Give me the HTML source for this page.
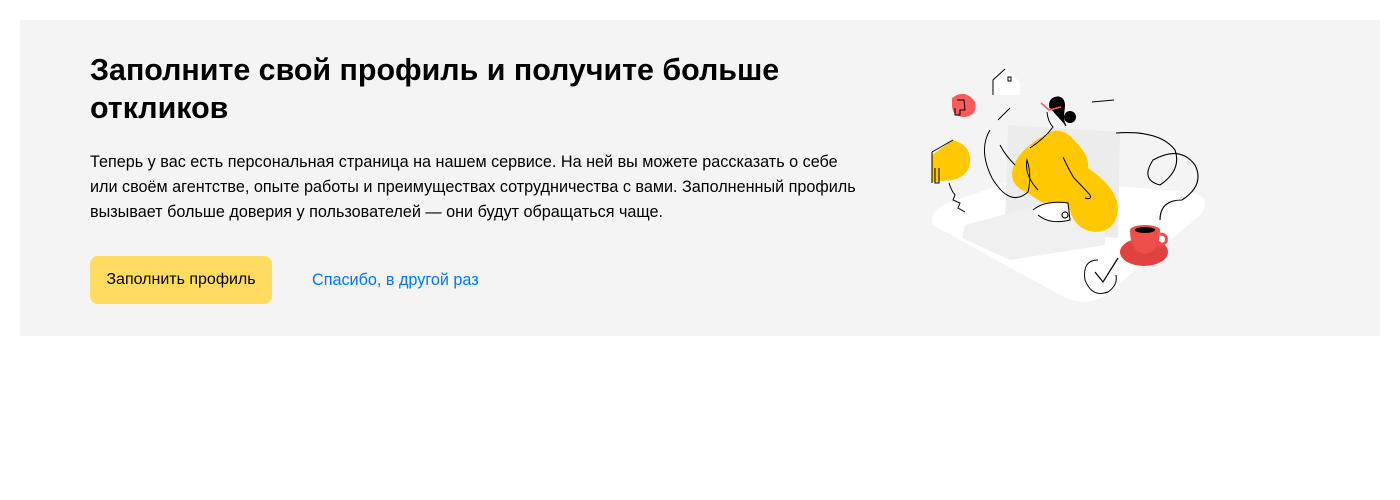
<!DOCTYPE html>
<html><head><meta charset="utf-8"><style>
body{margin:0;background:#fff;font-family:"Liberation Sans",sans-serif;}
.box{position:absolute;left:20px;top:20px;width:1360px;height:316px;background:#f4f4f4;}
h1{position:absolute;left:70px;top:31px;margin:0;width:740px;font-size:30.4px;line-height:38px;font-weight:bold;color:#000;}
p{position:absolute;left:70px;top:130px;margin:0;width:766px;font-size:16.2px;line-height:25px;color:#000;}
.btn{position:absolute;left:70px;top:236px;width:182px;height:48px;background:#ffdc60;border-radius:8px;font-size:16px;line-height:48px;text-align:center;color:#000;}
.lnk{position:absolute;left:292px;top:236px;line-height:48px;font-size:16.2px;color:#0077ff;}
svg{position:absolute;left:900px;top:40px;}
</style></head><body>
<div class="box">
<h1>Заполните свой профиль и получите больше откликов</h1>
<p>Теперь у вас есть персональная страница на нашем сервисе. На ней вы можете рассказать о себе или своём агентстве, опыте работы и преимуществах сотрудничества с вами. Заполненный профиль вызывает больше доверия у пользователей — они будут обращаться чаще.</p>
<div class="btn">Заполнить профиль</div>
<div class="lnk">Спасибо, в другой раз</div>
<svg width="300" height="250" viewBox="0 0 300 250" fill="none" stroke="#000" stroke-width="1.2">
<path d="M13,165 Q8,152 28,143 L100,118 L268,132 Q295,136 280,155 L190,232 Q168,250 140,235 Z" fill="#fff" stroke="none"/>
<path d="M88,65 L200,72 L198,178 L85,168 Z" fill="#ececec" stroke="none"/>
<path d="M45,165 L140,140 L185,150 L185,185 L90,200 L42,178 Z" fill="#f0f0f0" stroke="none"/>
<path d="M125,75 Q140,65 152,78 Q170,95 168,108 Q198,128 198,150 Q195,172 175,172 Q155,170 150,150 Q130,150 108,133 Q88,125 93,108 Q98,90 125,75 Z" fill="#ffc800" stroke="none"/>
<path d="M32,38 Q45,28 55,42 Q58,55 45,57 Q32,57 32,45 Z" fill="#ff5a5a" stroke="none"/>
<path d="M35,48 L35,55 L40,55 L40,50 L45,50 L44,40 L37,40" stroke-width="1"/>
<path d="M12,95 L33,80 Q50,85 50,100 Q50,115 33,120 L12,122 Z" fill="#ffc800" stroke="none"/>
<path d="M12,92 L12,123 M12,92 L33,80 M15,108 L15,123 L19,123 L19,108" stroke-width="1"/>
<path d="M29,123 Q31,130 35,135 L33,140 L40,143 L38,148 L45,152" stroke-width="1"/>
<path d="M73,35 L73,20 L85,9 L100,22 L100,35 Z" fill="#fff" stroke="none"/>
<path d="M73,35 L73,20 L85,9" stroke-width="1"/>
<rect x="88" y="17" width="3" height="4" stroke-width="1"/>
<path d="M130,48 Q128,38 138,37 Q146,38 144,50 Q142,60 146,66" fill="#000"/>
<circle cx="150" cy="57" r="6" fill="#000" stroke="none"/>
<path d="M121,43 L129,50 L141,47" stroke="#ff5a5a" stroke-width="1.6"/>
<path d="M127,52 Q128,62 133,67 Q125,78 110,88" stroke-width="1"/>
<path d="M70,70 Q58,90 72,118 Q90,148 108,132 Q112,115 107,100 Q104,115 118,130" stroke-width="1"/>
<path d="M78,60 L90,48 M80,85 Q85,95 95,105" stroke-width="1"/>
<path d="M113,150 Q125,140 148,143 L150,160 Q130,165 118,155" fill="#fff" stroke-width="1"/>
<circle cx="145" cy="155" r="3" fill="#fff"/>
<path d="M143,97 Q150,112 154,118 Q162,126 170,135 Q172,140 165,138" stroke-width="1"/>
<path d="M172,42 L194,40 M196,73 Q240,70 255,90 Q262,110 240,125 Q220,120 233,100 Q260,85 275,105 Q285,125 262,140 Q240,140 240,160" stroke-width="1.1"/>
<ellipse cx="224" cy="192" rx="24" ry="14" fill="#e0433f" stroke="none"/>
<path d="M210,170 Q210,192 225,194 Q240,192 240,170 Z" fill="#ef4f4b" stroke="none"/>
<ellipse cx="225" cy="170" rx="15" ry="5" fill="#ef4f4b" stroke="none"/>
<ellipse cx="225" cy="170" rx="10" ry="3" fill="#000" stroke="none"/>
<path d="M240,174 Q248,174 246,182 Q242,186 238,184" stroke="#ef4f4b" stroke-width="3"/>
<path d="M178,200 Q162,200 165,220 Q172,238 188,232 Q198,225 196,215" stroke-width="1"/>
<path d="M175,212 L183,222 L198,198" stroke-width="1.2"/>
</svg>
</div>
</body></html>
